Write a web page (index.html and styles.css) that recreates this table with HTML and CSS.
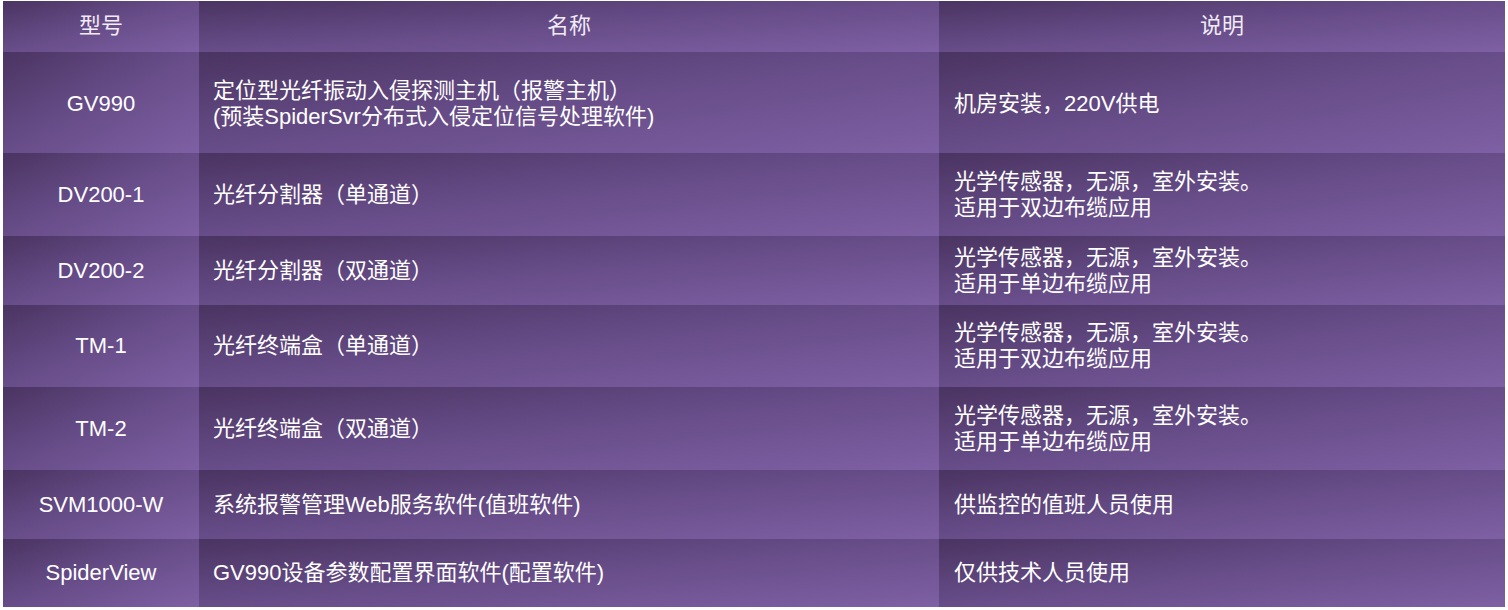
FILE: index.html
```html
<!DOCTYPE html>
<html lang="zh-CN">
<head>
<meta charset="utf-8">
<title>产品型号</title>
<link rel="stylesheet" href="styles.css">
</head>
<body>
<div class="table">
  <div class="cell head c1">型号</div>
  <div class="cell head c2">名称</div>
  <div class="cell head c3">说明</div>

  <div class="cell c1 r1">GV990</div>
  <div class="cell c2 r1">定位型光纤振动入侵探测主机（报警主机）<br>(预装SpiderSvr分布式入侵定位信号处理软件)</div>
  <div class="cell c3 r1">机房安装，220V供电</div>

  <div class="cell c1 r2">DV200-1</div>
  <div class="cell c2 r2">光纤分割器（单通道）</div>
  <div class="cell c3 r2">光学传感器，无源，室外安装。<br>适用于双边布缆应用</div>

  <div class="cell c1 r3">DV200-2</div>
  <div class="cell c2 r3">光纤分割器（双通道）</div>
  <div class="cell c3 r3">光学传感器，无源，室外安装。<br>适用于单边布缆应用</div>

  <div class="cell c1 r4">TM-1</div>
  <div class="cell c2 r4">光纤终端盒（单通道）</div>
  <div class="cell c3 r4">光学传感器，无源，室外安装。<br>适用于双边布缆应用</div>

  <div class="cell c1 r5">TM-2</div>
  <div class="cell c2 r5">光纤终端盒（双通道）</div>
  <div class="cell c3 r5">光学传感器，无源，室外安装。<br>适用于单边布缆应用</div>

  <div class="cell c1 r6">SVM1000-W</div>
  <div class="cell c2 r6">系统报警管理Web服务软件(值班软件)</div>
  <div class="cell c3 r6">供监控的值班人员使用</div>

  <div class="cell c1 r7">SpiderView</div>
  <div class="cell c2 r7">GV990设备参数配置界面软件(配置软件)</div>
  <div class="cell c3 r7">仅供技术人员使用</div>
</div>
</body>
</html>
```

FILE: styles.css
```css
html, body {
  margin: 0;
  padding: 0;
  background: #ffffff;
}

body {
  padding: 1px 3px 0 3px;
  font-family: "Liberation Sans", "Noto Sans CJK SC", sans-serif;
  font-size: 22px;
  line-height: 26px;
  color: #ffffff;
}

.table {
  width: 1502px;
  display: grid;
  grid-template-columns: 196px 740px 566px;
  grid-template-rows: 51px 101px 83px 69px 82px 83px 69px 68px;
}

.cell {
  display: flex;
  align-items: center;
  background: linear-gradient(to bottom right, #4a3461 0%, #654b86 45%, #7e60a4 100%);
  padding: 0 14px;
  box-sizing: border-box;
}

.c1 {
  justify-content: center;
  text-align: center;
  padding: 0;
}

.c3 {
  padding-left: 15px;
}

.head {
  justify-content: center;
  text-align: center;
  color: #f1ebf6;
  padding: 0 0 2px 0;
}

.r1 {
  padding-top: 2px;
}
```
